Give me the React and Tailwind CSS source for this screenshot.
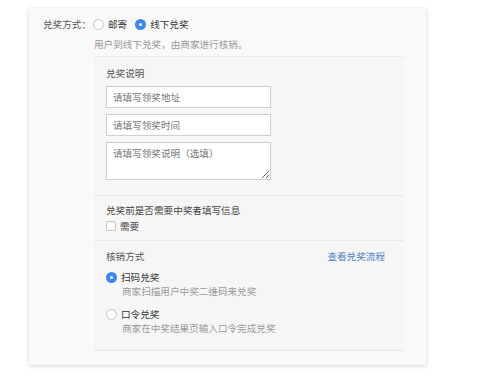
import React from "react";

function Radio({ checked }) {
  return checked ? (
    <span className="flex h-[11px] w-[11px] shrink-0 items-center justify-center rounded-full bg-[#3f86f2]">
      <span className="h-[3px] w-[3px] rounded-full bg-white" />
    </span>
  ) : (
    <span className="h-[11px] w-[11px] shrink-0 rounded-full border border-[#c4c4c4] bg-white" />
  );
}

export default function App() {
  return (
    <div className="min-h-[382px] w-[486px] bg-white pl-[29px] pt-[8px] text-[9.6px] leading-[14px] text-[#444]" style={{ fontFamily: '"Noto Sans CJK SC", "Noto Sans", sans-serif' }}>
      <div className="h-[357px] w-[397px] bg-[#f9f9f9] shadow-[0_1px_4px_rgba(0,0,0,0.18)]">
        <div className="flex items-center pt-[9px]">
          <div className="w-[64px] shrink-0 pr-[2px] text-right text-[#555]">兑奖方式：</div>
          <div className="flex items-center">
            <Radio checked={false} />
            <span className="ml-[4px] text-[#333]">邮寄</span>
            <span className="ml-[8px]"><Radio checked /></span>
            <span className="ml-[4px] text-[#333]">线下兑奖</span>
          </div>
        </div>
        <div className="ml-[65px] mt-[6px] text-[#9a9a9a]">用户到线下兑奖，由商家进行核销。</div>
        <div className="ml-[65px] mt-[5px] w-[310px] border-t border-[#ececec] bg-[#f6f6f6]">
          <div className="px-[12px] pb-[15px] pt-[9px]">
            <div className="text-[#555]">兑奖说明</div>
            <div className="mt-[6px] flex w-[165px] flex-col gap-[6px]">
              <input className="h-[22px] w-full border border-[#cfcfcf] bg-white px-[6px] text-[9.6px] outline-none placeholder:text-[#777]" placeholder="请填写领奖地址" />
              <input className="h-[22px] w-full border border-[#cfcfcf] bg-white px-[6px] text-[9.6px] outline-none placeholder:text-[#777]" placeholder="请填写领奖时间" />
              <textarea className="block h-[38px] w-full border border-[#cfcfcf] bg-white px-[6px] py-[3px] text-[9.6px] leading-[14px] outline-none placeholder:text-[#777]" placeholder="请填写领奖说明（选填）" />
            </div>
          </div>
          <div className="border-t border-[#e9e9e9] px-[12px] pb-[7px] pt-[7px]">
            <div className="text-[#444]">兑奖前是否需要中奖者填写信息</div>
            <div className="mt-[2px] flex items-center">
              <span className="h-[10px] w-[10px] rounded-[2px] border border-[#c4c4c4] bg-white" />
              <span className="ml-[4px] text-[#444]">需要</span>
            </div>
          </div>
          <div className="border-b border-[#e6e6e6] border-t border-t-[#e9e9e9] pb-[15px] pl-[12px] pr-[19px] pt-[8px]">
            <div className="flex items-center justify-between">
              <span className="text-[#555]">核销方式</span>
              <span className="text-[#4a7fc4]">查看兑奖流程</span>
            </div>
            <div className="mt-[7px]">
              <div className="flex items-center">
                <Radio checked />
                <span className="ml-[4px] text-[#333]">扫码兑奖</span>
              </div>
              <div className="pl-[16px] text-[#9a9a9a]">商家扫描用户中奖二维码来兑奖</div>
            </div>
            <div className="mt-[9px]">
              <div className="flex items-center">
                <Radio checked={false} />
                <span className="ml-[4px] text-[#333]">口令兑奖</span>
              </div>
              <div className="pl-[16px] text-[#9a9a9a]">商家在中奖结果页输入口令完成兑奖</div>
            </div>
          </div>
        </div>
      </div>
    </div>
  );
}
